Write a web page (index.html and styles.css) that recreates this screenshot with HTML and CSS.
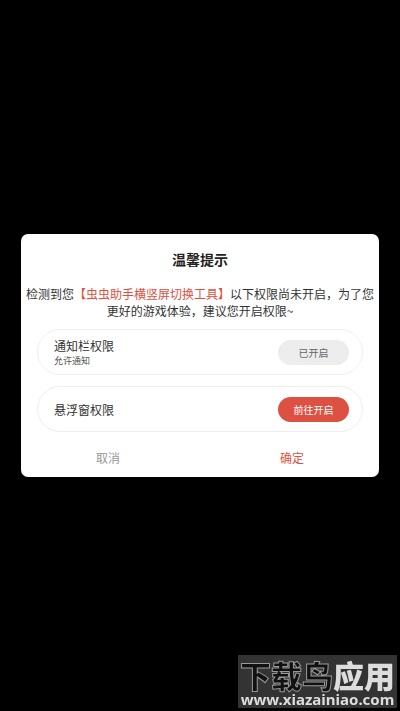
FILE: index.html
```html
<!DOCTYPE html>
<html lang="zh-CN">
<head>
  <meta charset="UTF-8" />
  <meta name="viewport" content="width=device-width, initial-scale=1.0"/>
  <title>温馨提示</title>
  <link rel="stylesheet" href="styles.css">
</head>
<body>
  <main class="dialog" role="dialog" aria-labelledby="dialog-title">
    <h1 id="dialog-title">温馨提示</h1>
    <p class="message">检测到您<span class="app-name">【虫虫助手横竖屏切换工具】</span>以下权限尚未开启，为了您更好的游戏体验，建议您开启权限~</p>
    <ul class="permissions">
      <li class="permission">
        <div class="info">
          <h2>通知栏权限</h2>
          <p>允许通知</p>
        </div>
        <button class="toggle" disabled>已开启</button>
      </li>
      <li class="permission">
        <div class="info">
          <h2>悬浮窗权限</h2>
        </div>
        <button class="toggle open">前往开启</button>
      </li>
    </ul>
    <div class="actions">
      <button class="cancel">取消</button>
      <button class="confirm">确定</button>
    </div>
  </main>
  <div class="watermark">
    <div class="brand"><span class="outlined">下载鸟</span>应用</div>
    <div class="site">www.xiazainiao.com</div>
  </div>
</body>
</html>
```

FILE: styles.css
```css
* {
  box-sizing: border-box;
}
body {
  margin: 0;
  min-height: 100vh;
  display: flex;
  align-items: center;
  justify-content: center;
  background-color: #000;
  color: #333;
  font-family: "Noto Sans CJK SC", sans-serif;
}
h1, h2, p, ul {
  margin: 0;
  padding: 0;
}
button {
  border: none;
  background: none;
  padding: 0;
  font-family: inherit;
  cursor: pointer;
}
.dialog {
  width: 100%;
  max-width: 420px;
  margin: 0 21px;
  padding: 15px 4px 7px;
  background-color: #fff;
  border-radius: 7px;
}
h1 {
  font-size: 14px;
  line-height: 20px;
  text-align: center;
  color: #222;
}
.message {
  margin-top: 16px;
  font-size: 12px;
  line-height: 17px;
  text-align: center;
}
.app-name {
  color: #dc5142;
}
.permissions {
  list-style: none;
  margin: 10px 12px 0;
  display: flex;
  flex-direction: column;
  gap: 11px;
}
.permission {
  display: flex;
  align-items: center;
  justify-content: space-between;
  min-height: 46px;
  padding: 0 13px 0 16px;
  border: 1px solid #eee;
  border-radius: 23px;
}
h2 {
  font-size: 12px;
  line-height: 17px;
  font-weight: 400;
}
.info p {
  font-size: 9px;
  line-height: 14px;
  color: #555;
}
.toggle {
  width: 71px;
  height: 25px;
  border-radius: 13px;
  font-size: 10px;
  background-color: #ededed;
  color: #666;
}
.toggle.open {
  background-color: #dc5142;
  color: #fff;
}
.actions {
  display: flex;
  gap: 18px;
  margin-top: 14px;
}
.actions button {
  flex: 1;
  font-size: 12px;
  line-height: 24px;
}
.cancel {
  color: #999;
}
.confirm {
  color: #dc5142;
}
/* site mark in the corner */
.watermark {
  position: fixed;
  right: 3px;
  bottom: 3px;
  width: 159px;
  height: 53px;
  padding-top: 4px;
  background-color: #333;
  color: #ddd;
  text-align: center;
  white-space: nowrap;
}
.brand {
  font-size: 31px;
  line-height: 32px;
  font-weight: 900;
}
.outlined {
  color: #111;
  -webkit-text-stroke: 1px #999;
}
.site {
  font-family: "Noto Sans", sans-serif;
  font-size: 15px;
  line-height: 16px;
  font-weight: 700;
}
```
